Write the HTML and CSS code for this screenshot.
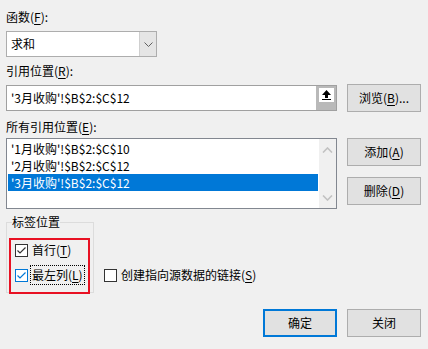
FILE: index.html
```html
<!DOCTYPE html>
<html>

<head>
    <title>合并计算</title>

    <link rel="stylesheet" href="styles.css">
</head>

<body>
    <div class="dialog">
        <div class="label">函数(<u>F</u>):</div>
        <div class="combo">
            <span class="combo-text">求和</span>
            <span class="combo-btn">
                <svg width="9" height="5" viewBox="0 0 9 5"><polyline points="0.5,0.5 4.5,4.5 8.5,0.5" fill="none" stroke="#606060" stroke-width="1"/></svg>
            </span>
        </div>

        <div class="label label-ref">引用位置(<u>R</u>):</div>
        <div class="row">
            <div class="ref-input">
                <span class="ref-text">'3月收购'!$B$2:$C$12</span>
                <span class="collapse-btn">
                    <span class="collapse-face">
                        <svg width="15" height="14" viewBox="0 0 15 14">
                            <polygon points="7.5,2 12,7 9,7 9,10 6,10 6,7 3,7" fill="#000"/>
                            <rect x="3" y="11" width="9" height="1" fill="#000"/>
                        </svg>
                    </span>
                </span>
            </div>
            <button class="btn">浏览(<u>B</u>)...</button>
        </div>

        <div class="label label-all">所有引用位置(<u>E</u>):</div>
        <div class="row row-top">
            <div class="list">
                <div class="items">
                    <div class="item">'1月收购'!$B$2:$C$10</div>
                    <div class="item">'2月收购'!$B$2:$C$12</div>
                    <div class="item selected">'3月收购'!$B$2:$C$12</div>
                </div>
                <div class="scrollbar">
                    <svg width="11" height="6" viewBox="0 0 11 6"><polyline points="1,5.5 5.5,1 10,5.5" fill="none" stroke="#c2c2c2" stroke-width="1.6"/></svg>
                    <svg width="11" height="6" viewBox="0 0 11 6"><polyline points="1,0.5 5.5,5 10,0.5" fill="none" stroke="#c2c2c2" stroke-width="1.6"/></svg>
                </div>
            </div>
            <div class="side">
                <button class="btn">添加(<u>A</u>)</button>
                <button class="btn">删除(<u>D</u>)</button>
            </div>
        </div>

        <div class="options">
            <fieldset class="group">
                <legend>标签位置</legend>
                <label class="check">
                    <span class="box">
                        <svg width="11" height="11" viewBox="0 0 11 11"><polyline points="1.5,5.5 4,8 9.5,2.5" fill="none" stroke="#333" stroke-width="1.2"/></svg>
                    </span>
                    <span>首行(<u>T</u>)</span>
                </label>
                <label class="check">
                    <span class="box box-focus">
                        <svg width="11" height="11" viewBox="0 0 11 11"><polyline points="1.5,5.5 4,8 9.5,2.5" fill="none" stroke="#0078d7" stroke-width="1.2"/></svg>
                    </span>
                    <span class="focus">最左列(<u>L</u>)</span>
                </label>
            </fieldset>
            <label class="check check-link">
                <span class="box"></span>
                <span>创建指向源数据的链接(<u>S</u>)</span>
            </label>
            <div class="mark"></div>
        </div>

        <div class="actions">
            <button class="btn btn-default">确定</button>
            <button class="btn">关闭</button>
        </div>
    </div>
</body>

</html>
```

FILE: styles.css
```css
body {
    margin: 0;
    background: #f0f0f0;
    font: 12px/16px "Noto Sans CJK SC", "Noto Sans", sans-serif;
    color: #000;
}

u {
    text-decoration-thickness: 1px;
    text-underline-offset: 2px;
}

.dialog {
    width: 415px;
    padding: 9px 7px 0 6px;
}

.label-ref {
    margin-top: 6px;
}

.label-all {
    margin-top: 7px;
}

.combo {
    display: flex;
    width: 151px;
    height: 26px;
    margin-top: 6px;
    box-sizing: border-box;
    border: 1px solid #adadad;
    background: #fff;
}

.combo-text {
    flex: 1;
    padding-left: 4px;
    line-height: 24px;
}

.combo-btn {
    width: 16px;
    display: flex;
    align-items: center;
    justify-content: center;
    border-left: 1px solid #cfcfcf;
    background: #e5e5e5;
}

.row {
    display: flex;
    align-items: center;
    gap: 10px;
    margin-top: 5px;
}

.row-top {
    align-items: flex-start;
    margin-top: 3px;
}

.ref-input {
    display: flex;
    width: 331px;
    height: 26px;
    box-sizing: border-box;
    border: 1px solid #a0a0a0;
    background: #fff;
}

.ref-text {
    flex: 1;
    padding-left: 4px;
    line-height: 24px;
}

.collapse-btn {
    width: 20px;
    padding: 2px 2px 0 3px;
    box-sizing: border-box;
    background: #b9b9b9;
}

.collapse-face {
    display: block;
    width: 15px;
    height: 14px;
    background: #fff;
}

.collapse-face svg {
    display: block;
}

.btn {
    width: 74px;
    height: 28px;
    padding: 0;
    box-sizing: border-box;
    border: 1px solid #adadad;
    background: #e1e1e1;
    font: inherit;
    color: #000;
}

.btn-default {
    border: 2px solid #0078d7;
}

.list {
    display: flex;
    width: 331px;
    height: 71px;
    box-sizing: border-box;
    border: 1px solid #828790;
    background: #fff;
}

.items {
    flex: 1;
    padding: 1px 1px 0;
}

.item {
    height: 17px;
    padding-left: 3px;
    line-height: 17px;
}

.item.selected {
    background: #0078d7;
    color: #fff;
}

.scrollbar {
    width: 17px;
    display: flex;
    flex-direction: column;
    justify-content: space-between;
    align-items: center;
    padding: 8px 0 7px;
    box-sizing: border-box;
    background: #f0f0f0;
}

.side {
    display: flex;
    flex-direction: column;
    gap: 11px;
}

.options {
    position: relative;
    display: flex;
    gap: 10px;
    margin-top: 5px;
}

.group {
    width: 88px;
    margin: 0;
    padding: 12px 4px 9px 5px;
    box-sizing: border-box;
    border: 1px solid #dcdcdc;
}

.group legend {
    padding: 0;
    line-height: 16px;
}

.check {
    display: flex;
    align-items: center;
    gap: 4px;
    height: 16px;
    margin-left: 3px;
}

.check + .check {
    margin-top: 9px;
}

.box {
    width: 13px;
    height: 13px;
    box-sizing: border-box;
    border: 1px solid #333;
    background: #fff;
}

.box svg {
    display: block;
}

.box-focus {
    border-color: #0078d7;
}

.focus {
    outline: 1px dotted #000;
    outline-offset: 1px;
}

.check-link {
    align-self: flex-end;
    margin: 0 0 10px;
}

.mark {
    position: absolute;
    left: 3px;
    top: 24px;
    width: 81px;
    height: 56px;
    box-sizing: border-box;
    border: 2px solid #e81123;
}

.actions {
    display: flex;
    justify-content: flex-end;
    gap: 10px;
    margin-top: 16px;
}
```
